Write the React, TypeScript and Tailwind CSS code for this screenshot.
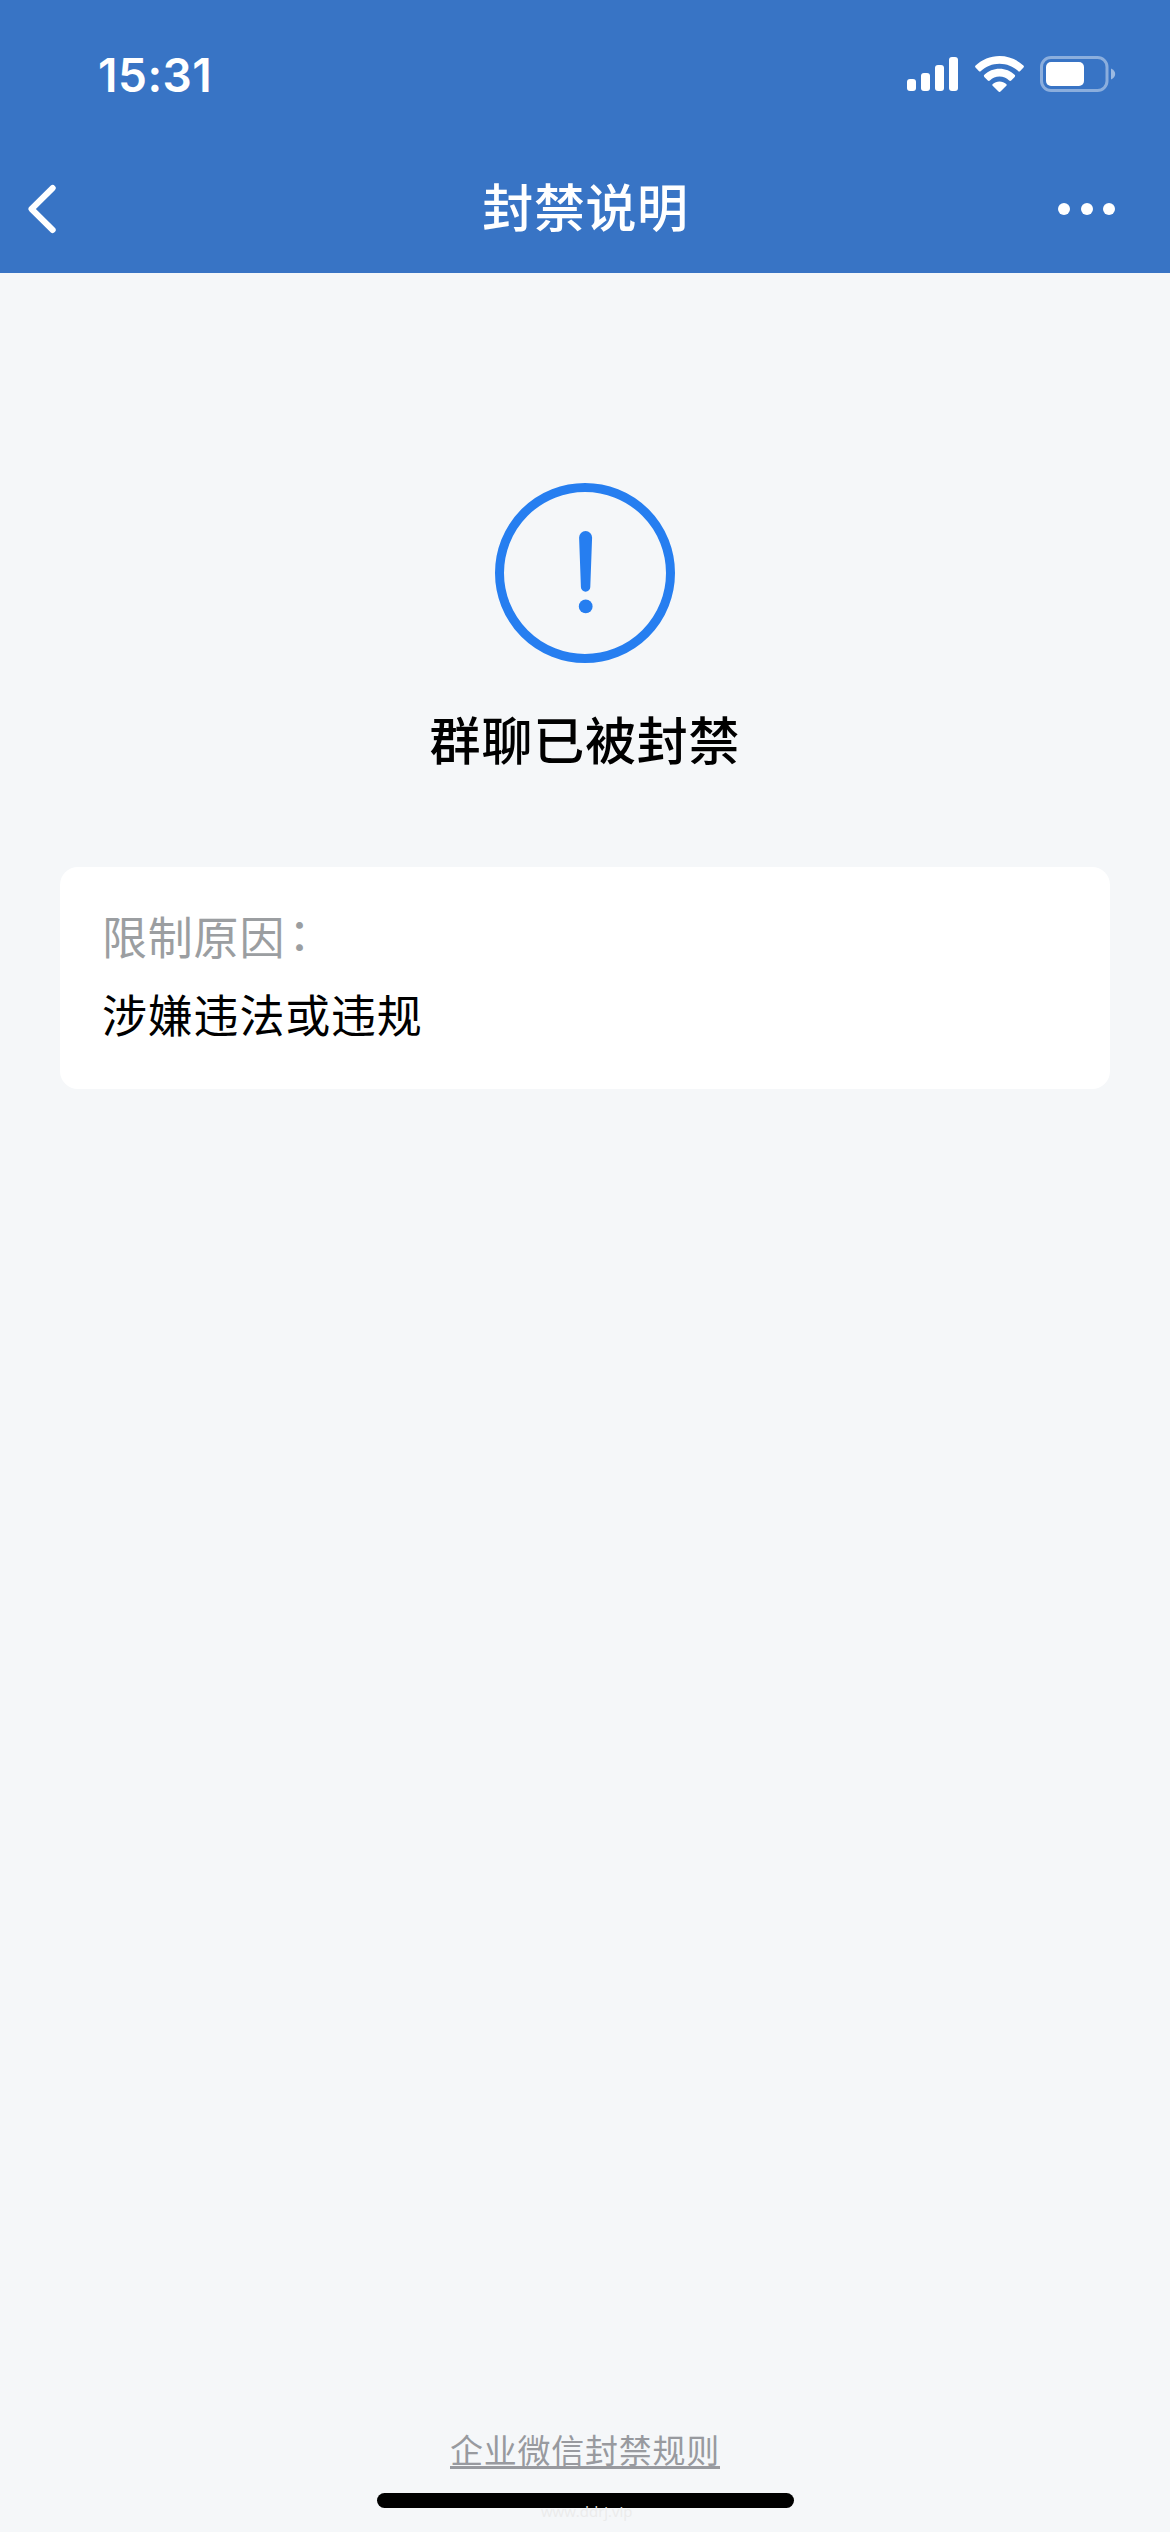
const SIGNAL_BARS = ["h-3", "h-[18px]", "h-[26px]", "h-[34px]"];

function SignalIcon() {
  return (
    <div className="flex h-[34px] items-end gap-[5px]">
      {SIGNAL_BARS.map((height) => (
        <span key={height} className={`w-[9px] rounded-[3px] bg-white ${height}`} />
      ))}
    </div>
  );
}

function WifiIcon() {
  return (
    <svg className="ml-[17px] h-9 w-[49px]" viewBox="0 0 49 36" fill="#fff">
      <path d="M24.500 0C15.300 0 6.900 3.600.6 9.500c-.7.700-.7 1.400-.1 2.100l3.300 3.400c.7.700 1.400.7 2.100 0C10.800 10.500 17.300 7.700 24.500 7.700s13.700 2.800 18.600 7.300c.7.700 1.400.7 2.100 0l3.300-3.400c.6-.7.600-1.400-.1-2.100C42.100 3.600 33.700 0 24.500 0Z" />
      <path d="M24.500 12.800c-5.900 0-11.200 2.300-15.100 6-.7.700-.7 1.400-.1 2.100l3.500 3.500c.7.700 1.400.6 2.100 0 2.500-2.400 5.900-3.900 9.600-3.900s7.100 1.500 9.600 3.900c.7.600 1.400.7 2.100 0l3.500-3.500c.6-.7.600-1.400-.1-2.100-3.900-3.700-9.200-6-15.100-6Z" />
      <path d="M24.500 25.500c-2.600 0-4.900.9-6.700 2.400-.7.600-.7 1.300-.1 1.900l5.800 5.700c.7.700 1.300.7 2 0l5.800-5.700c.6-.6.600-1.300-.1-1.900-1.800-1.500-4.100-2.400-6.700-2.400Z" />
    </svg>
  );
}

function BatteryIcon() {
  return (
    <svg className="ml-4 h-9 w-[76px]" viewBox="0 0 76 36">
      <rect x="1.500" y="1.500" width="65.500" height="33" rx="9.500" fill="none" stroke="#fff" strokeOpacity=".42" strokeWidth="3" />
      <rect x="6" y="6" width="38" height="24" rx="5" fill="#fff" />
      <path d="M71 12.500c2.600 1 4.200 3.200 4.200 5.500s-1.600 4.500-4.200 5.500Z" fill="#fff" fillOpacity=".5" />
    </svg>
  );
}

function StatusBar() {
  return (
    <div className="flex h-[145px] items-start justify-between pt-[47px] pr-[54px] pl-[98px]">
      <time className="font-['Inter',sans-serif] text-[46px] leading-[56px] font-semibold tracking-[0.5px]">15:31</time>
      <div className="flex items-center pt-[9px]">
        <SignalIcon />
        <WifiIcon />
        <BatteryIcon />
      </div>
    </div>
  );
}

function NavBar() {
  return (
    <div className="grid h-32 grid-cols-3 items-center pr-[55px] pl-7">
      <button aria-label="返回" className="w-fit">
        <svg className="h-[50px] w-7" viewBox="0 0 28 50" fill="none" stroke="#fff" strokeWidth="6" strokeLinecap="round" strokeLinejoin="round">
          <path d="M24.700 4 3.500 25l21.200 21" />
        </svg>
      </button>
      <h1 className="translate-x-[14px] pb-2 text-center text-[51px] leading-[72px] font-medium tracking-[0.6px]">
        封禁说明
      </h1>
      <button aria-label="更多" className="flex justify-end gap-[10.500px]">
        <span className="size-3 rounded-full bg-white" />
        <span className="size-3 rounded-full bg-white" />
        <span className="size-3 rounded-full bg-white" />
      </button>
    </div>
  );
}

function WarningIcon() {
  return (
    <svg className="size-[180px]" viewBox="0 0 180 180" fill="#267ef0">
      <circle cx="90" cy="90" r="85.500" fill="none" stroke="#267ef0" strokeWidth="9" />
      <path d="M84.100 54.500a6.500 6.500 0 0 1 13 0L95.300 104a4.700 4.700 0 0 1-9.400 0Z" />
      <circle cx="90.700" cy="123.400" r="6.900" />
    </svg>
  );
}

export default function App() {
  return (
    <div className="flex h-[2532px] w-[1170px] flex-col bg-[#f5f7f9] font-['Noto_Sans_CJK_SC',sans-serif] text-black">
      <header className="h-[273px] bg-[#3874c5] text-white">
        <StatusBar />
        <NavBar />
      </header>

      <main className="flex flex-1 flex-col items-center px-[60px] pt-[210px]">
        <WarningIcon />
        <h2 className="mt-[39px] text-[51px] leading-[72px] font-medium tracking-[0.8px]">群聊已被封禁</h2>
        <section className="mt-[93px] h-[222px] w-full rounded-[18px] bg-white px-[42px] pt-[30px] text-[45px] leading-[78px] tracking-[0.8px]">
          <p className="text-[#9b9ea1]">
            限制原因<span className="inline-block translate-x-[3px] -translate-y-1 leading-none">：</span>
          </p>
          <p>涉嫌违法或违规</p>
        </section>
      </main>

      <footer className="relative flex h-[112px] flex-col items-center">
        <a className="h-[49px] border-b-[3px] border-[#989a9f] text-[33px] leading-[59px] tracking-[0.75px] text-[#989a9f]">
          企业微信封禁规则
        </a>
        <div className="mt-6 h-[15px] w-[417px] rounded-full bg-black" />
        <span className="absolute top-[80px] left-[541px] font-['Open_Sans',sans-serif] text-[15px] leading-[22px] text-[#ebebeb]">
          www.ddrj.vip
        </span>
      </footer>
    </div>
  );
}
